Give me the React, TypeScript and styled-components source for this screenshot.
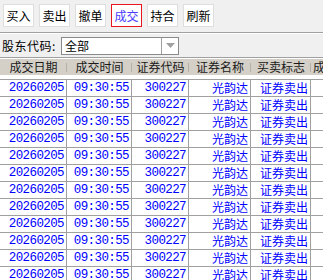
import styled, { createGlobalStyle } from "styled-components";

const GlobalStyle = createGlobalStyle`
    html, body {
        margin: 0;
        padding: 0;
        background: #f0f0f0;
        overflow: hidden;
    }
    body {
        font-family: "Noto Sans CJK SC", "Liberation Sans", sans-serif;
        font-size: 12px;
        color: #000;
    }
`

const buttons = ['买入', '卖出', '撤单', '成交', '持合', '刷新'];
const headers = ['成交日期', '成交时间', '证券代码', '证券名称', '买卖标志', '成交'];
const widths = '67px 65px 57px 62px 60px 1fr';

const rows = Array.from({ length: 12 }, () => ({
    date: '20260205',
    time: '09:30:55',
    code: '300227',
    name: '光韵达',
    flag: '证券卖出',
}));

function App() {
    return (
        <>
            <GlobalStyle />
            <Page>
                <Toolbar>
                    {buttons.map((b) => (
                        <ToolButton key={b} $active={b === '成交'}>{b}</ToolButton>
                    ))}
                </Toolbar>
                <FilterRow>
                    <FilterLabel>股东代码:</FilterLabel>
                    <Select>
                        <SelectValue>全部</SelectValue>
                        <SelectArrow>
                            <svg width="9" height="5" viewBox="0 0 9 5">
                                <path d="M0 0 L9 0 L4.5 5 Z" fill="#a0a0a0" />
                            </svg>
                        </SelectArrow>
                    </Select>
                </FilterRow>
                <Grid>
                    <HeaderRow>
                        {headers.map((h) => (
                            <HeaderCell key={h}>{h}</HeaderCell>
                        ))}
                    </HeaderRow>
                    <Body>
                        {rows.map((r, i) => (
                            <DataRow key={i}>
                                <Cell $mono>{r.date}</Cell>
                                <Cell $mono>{r.time}</Cell>
                                <Cell $mono>{r.code}</Cell>
                                <Cell>{r.name}</Cell>
                                <Cell>{r.flag}</Cell>
                                <Cell />
                            </DataRow>
                        ))}
                    </Body>
                </Grid>
            </Page>
        </>
    )
}

const Page = styled.div`
    width: 323px;
    height: 280px;
    display: flex;
    flex-direction: column;
    overflow: hidden;
`

const Toolbar = styled.div`
    height: 33px;
    box-sizing: border-box;
    padding: 4px 0 0 3px;
    display: flex;
    gap: 5px;
    align-items: flex-start;
    border-bottom: 1px solid #a0a0a0;
    flex-shrink: 0;
`

const ToolButton = styled.div<{ $active?: boolean }>`
    width: 31px;
    height: 23px;
    box-sizing: border-box;
    background: #fff;
    border: 1px solid ${p => p.$active ? '#e8141e' : '#dedede'};
    color: ${p => p.$active ? '#4b3cff' : '#000'};
    font-size: 12px;
    display: flex;
    align-items: center;
    justify-content: center;
    line-height: 1;
`

const FilterRow = styled.div`
    height: 25px;
    box-sizing: border-box;
    border-top: 1px solid #fff;
    border-bottom: 1px solid #a0a0a0;
    display: flex;
    align-items: center;
    padding-left: 2px;
    flex-shrink: 0;
`

const FilterLabel = styled.span`
    font-size: 12px;
    width: 59px;
    letter-spacing: 0.5px;
`

const Select = styled.div`
    width: 118px;
    height: 18px;
    box-sizing: border-box;
    border: 1px solid #8a8a8a;
    background: #fff;
    display: flex;
    align-items: stretch;
`

const SelectValue = styled.div`
    flex: 1;
    padding-left: 3px;
    font-size: 12px;
    line-height: 16px;
`

const SelectArrow = styled.div`
    width: 16px;
    border-left: 1px solid #a0a0a0;
    display: flex;
    align-items: center;
    justify-content: center;
`

const Grid = styled.div`
    flex: 1;
    background: #fff;
    padding-top: 1px;
    overflow: hidden;
`

const HeaderRow = styled.div`
    display: grid;
    grid-template-columns: ${widths};
    height: 16px;
    background: #d4d0c8;
`

const HeaderCell = styled.div`
    position: relative;
    font-size: 12px;
    line-height: 16px;
    color: #1a1a1a;
    text-align: center;
    white-space: nowrap;
    overflow: hidden;
    &:last-child {
        text-align: left;
        padding-left: 2px;
    }
    &::after {
        content: '';
        position: absolute;
        right: 0;
        top: 4px;
        height: 9px;
        width: 1px;
        background: #b4b0a8;
    }
    &:last-child::after {
        display: none;
    }
`

const Body = styled.div`
    margin-top: 4px;
`

const DataRow = styled.div`
    display: grid;
    grid-template-columns: ${widths};
    height: 17px;
    box-sizing: border-box;
    border-top: 1px solid #a0a0a0;
`

const Cell = styled.div<{ $mono?: boolean }>`
    border-right: 1px solid #a0a0a0;
    color: #0000ff;
    text-align: right;
    padding-right: 2px;
    font-family: ${p => p.$mono ? '"Liberation Mono", "DejaVu Sans Mono", monospace' : '"Noto Sans CJK SC", sans-serif'};
    font-size: ${p => p.$mono ? '12.5px' : '12px'};
    letter-spacing: ${p => p.$mono ? '-0.6px' : '0'};
    line-height: 16px;
    white-space: nowrap;
    overflow: hidden;
    &:last-child {
        border-right: none;
    }
`

export default App;
